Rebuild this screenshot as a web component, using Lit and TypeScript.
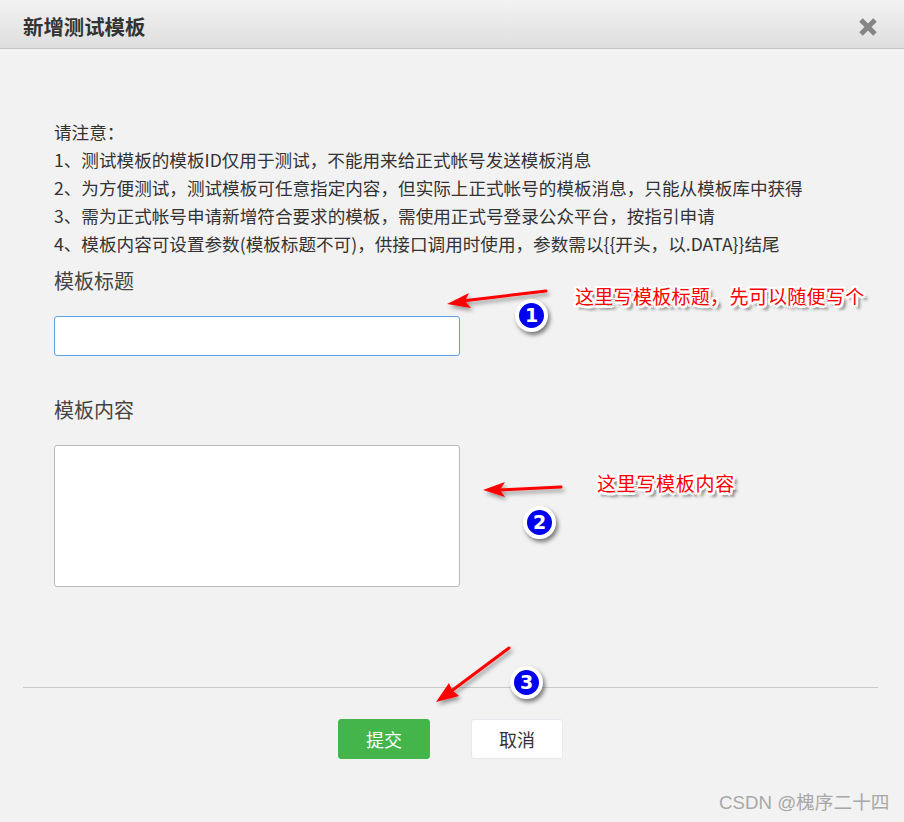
import { LitElement, html, css, svg } from "lit";
import { customElement } from "lit/decorators.js";

const FONT = `"Noto Sans CJK SC", "Liberation Sans", sans-serif`;

@customElement("app-root")
export class AppRoot extends LitElement {
  static styles = css`
    :host {
      display: block;
      position: relative;
      width: 904px;
      height: 822px;
      overflow: hidden;
      background: #f2f2f2;
      color: #333;
      font-family: "Liberation Sans", "Noto Sans CJK SC", sans-serif;
    }
    .header {
      height: 48px;
      border-bottom: 1px solid #c6c6c6;
      background: linear-gradient(#f3f3f3, #dedede);
      display: flex;
      align-items: center;
      justify-content: space-between;
      padding: 0 26px 0 23px;
    }
    .title {
      font-size: 20.4px;
      font-weight: 700;
      line-height: 48px;
      margin-top: 3px;
      color: #333;
    }
    .close {
      width: 20px;
      height: 20px;
      margin-top: 6px;
      display: block;
    }
    .body {
      padding: 69px 0 0 54px;
      display: flex;
      flex-direction: column;
      align-items: flex-start;
    }
    .notes {
      font-size: 17.6px;
      line-height: 28px;
      color: #333;
      white-space: nowrap;
    }
    .label {
      font-size: 20px;
      line-height: 28px;
      color: #444;
    }
    .label.first {
      margin-top: 9px;
    }
    .label.second {
      margin-top: 40px;
    }
    .field {
      box-sizing: border-box;
      width: 406px;
      margin: 0;
      padding: 0 10px;
      background: #fff;
      border-radius: 3px;
      display: block;
      outline: none;
      font: inherit;
    }
    .input {
      height: 40px;
      border: 1px solid #5aa2e6;
      margin-top: 21px;
    }
    .textarea {
      height: 142px;
      border: 1px solid #b9b9b9;
      margin-top: 21px;
      resize: none;
    }
    .rule {
      height: 1px;
      background: #c9c9c9;
      margin: 100px 26px 0 23px;
    }
    .actions {
      margin: 31px 0 0 338px;
      display: flex;
      gap: 41px;
    }
    .btn {
      box-sizing: border-box;
      width: 92px;
      height: 40px;
      border-radius: 3px;
      font-family: inherit;
      font-size: 18px;
      padding: 0;
    }
    .primary {
      background: #43b54a;
      border: 1px solid #43b54a;
      color: #fff;
    }
    .secondary {
      background: #fff;
      border: 1px solid #e8e8ee;
      color: #333;
    }
    .overlay {
      position: absolute;
      left: 0;
      top: 0;
      width: 904px;
      height: 822px;
      pointer-events: none;
    }
    .note {
      position: absolute;
      font-size: 19px;
      line-height: 28px;
      white-space: nowrap;
      color: #f00;
      text-shadow:
        2.5px 0 0 #fff, -2.5px 0 0 #fff, 0 2.5px 0 #fff, 0 -2.5px 0 #fff,
        2px 2px 0 #fff, -2px 2px 0 #fff, 2px -2px 0 #fff, -2px -2px 0 #fff,
        4px 4px 3px rgba(0, 0, 0, 0.6),
        2px 2px 4px rgba(0, 0, 0, 0.4);
    }
    .n1 {
      left: 575px;
      top: 282px;
      letter-spacing: 0.3px;
    }
    .n2 {
      left: 597px;
      top: 469px;
      letter-spacing: 0.7px;
    }
    .badge {
      position: absolute;
      box-sizing: border-box;
      width: 33px;
      height: 33px;
      border-radius: 50%;
      border: 4px solid #fff;
      background: #0000f0;
      color: #fff;
      font-family: "DejaVu Sans", sans-serif;
      font-weight: 700;
      font-size: 19px;
      line-height: 25px;
      text-align: center;
      box-shadow: 2px 3px 4px rgba(0, 0, 0, 0.5);
    }
    .b1 { left: 515px; top: 299px; }
    .b2 { left: 523px; top: 506px; }
    .b3 { left: 510px; top: 666px; }
    .mark {
      position: absolute;
      left: 719px;
      top: 790px;
      font-size: 18.7px;
      line-height: 26px;
      white-space: nowrap;
      color: #a8a8a8;
    }
  `;

  private arrow(shaft: string, head: string) {
    return svg`
      <g filter="url(#s)">
        <polyline points=${shaft} fill="none" stroke="#f00" stroke-width="3" stroke-linecap="round"></polyline>
        <polygon points=${head} fill="#f00"></polygon>
      </g>`;
  }

  render() {
    return html`
      <div class="header" style="font-family:${FONT}">
        <div class="title">新增测试模板</div>
        <svg class="close" viewBox="0 0 20 20">
          <path d="M3 3 L17 17 M17 3 L3 17" stroke="#858585" stroke-width="5" fill="none"></path>
        </svg>
      </div>

      <div class="body" style="font-family:${FONT}">
        <div class="notes">
          请注意：<br />
          1、测试模板的模板ID仅用于测试，不能用来给正式帐号发送模板消息<br />
          2、为方便测试，测试模板可任意指定内容，但实际上正式帐号的模板消息，只能从模板库中获得<br />
          3、需为正式帐号申请新增符合要求的模板，需使用正式号登录公众平台，按指引申请<br />
          4、模板内容可设置参数(模板标题不可)，供接口调用时使用，参数需以{{开头，以.DATA}}结尾
        </div>
        <div class="label first">模板标题</div>
        <input class="field input" type="text" />
        <div class="label second">模板内容</div>
        <textarea class="field textarea"></textarea>
      </div>

      <div class="rule"></div>
      <div class="actions" style="font-family:${FONT}">
        <button class="btn primary">提交</button>
        <button class="btn secondary">取消</button>
      </div>

      <svg class="overlay" viewBox="0 0 904 822">
        <defs>
          <filter id="s" x="-20%" y="-50%" width="140%" height="200%">
            <feDropShadow dx="2" dy="3" stdDeviation="2" flood-color="#000" flood-opacity="0.4"></feDropShadow>
          </filter>
        </defs>
        ${this.arrow("546,291 462,301", "447,304 469,293 465,301 471,308")}
        ${this.arrow("561,487 498,490", "483,490 505,482 500,490 505,497")}
        ${this.arrow("509,648 450,692", "436,702 449,683 452,690 459,696")}
      </svg>

      <div class="note n1" style="font-family:${FONT}">这里写模板标题，先可以随便写个</div>
      <div class="note n2" style="font-family:${FONT}">这里写模板内容</div>
      <div class="badge b1">1</div>
      <div class="badge b2">2</div>
      <div class="badge b3">3</div>
      <div class="mark">CSDN @槐序二十四</div>
    `;
  }
}
